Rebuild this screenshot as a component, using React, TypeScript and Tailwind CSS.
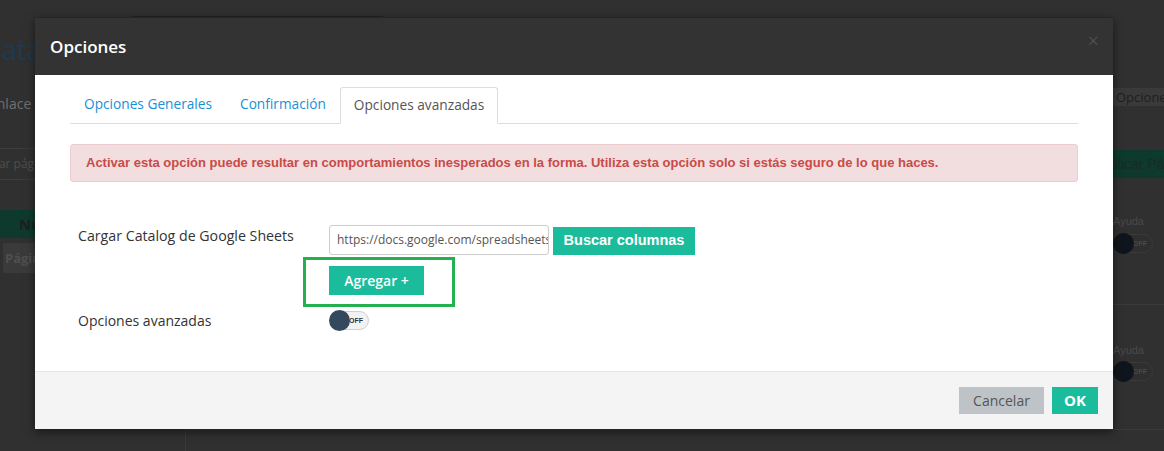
import React from "react";

function Toggle({ dark = false }: { dark?: boolean }) {
  return (
    <div className="relative h-[19px] w-[40px]">
      <div
        className={`absolute inset-y-0 left-[6px] right-0 rounded-full border ${
          dark ? "border-[#3a3a3a] bg-[#2f2f2f]" : "border-[#cfcfcf] bg-[#f2f2f2]"
        } flex items-center justify-end pr-[5px]`}
      >
        <span
          className={`text-[7px] font-bold leading-none ${dark ? "text-[#4a4a4a]" : "text-[#333]"}`}
          style={{ fontFamily: "'Liberation Sans', Arial, sans-serif" }}
        >
          OFF
        </span>
      </div>
      <div
        className={`absolute left-0 top-[-1px] h-[21px] w-[21px] rounded-full ${
          dark ? "bg-[#0f151c]" : "bg-[#34495e]"
        }`}
      />
    </div>
  );
}

export default function App() {
  const sans = { fontFamily: "'Open Sans', 'Noto Sans', sans-serif" };
  const arial = { fontFamily: "'Liberation Sans', Arial, sans-serif" };
  return (
    <div className="relative h-[451px] w-[1164px] overflow-hidden bg-[#303030]" style={sans}>
      {/* dimmed background page, left strip */}
      <div className="absolute left-0 top-0 h-[451px] w-[35px] overflow-hidden">
        <div className="absolute left-[-15px] top-[36px] whitespace-nowrap text-[27px] leading-none text-[#1d3a50]">Catal</div>
        <div className="absolute left-[-11px] top-[93px] whitespace-nowrap text-[14px] text-[#6f6f6f]">Enlace</div>
        <div className="absolute left-0 top-[148px] h-[32px] w-[40px] whitespace-nowrap border-y border-[#3c3c3c] pt-[6px] text-[12px] text-[#4e4e4e]">
          <span className="ml-[-6px]">rar pág</span>
        </div>
        <div className="absolute left-0 top-[210px] h-[28px] w-[40px] bg-[#0d3a2c] pl-[19px] pt-[3px] text-[15px] font-bold text-[#1f1f1f]">
          Nu
        </div>
        <div className="absolute left-[3px] top-[243px] h-[30px] w-[40px] whitespace-nowrap bg-[#3a3a3a] pl-[2px] pt-[6px] text-[13px] font-bold text-[#4f4f4f]">
          Págin
        </div>
      </div>
      <div className="absolute left-[185px] top-[429px] h-[30px] w-[1000px] border-l border-t border-[#3a3a3a]" />
      <div className="absolute left-[131px] top-[16px] h-[1px] w-[252px] bg-[#242424]" />

      {/* dimmed background page, right strip */}
      <div className="absolute left-[1113px] top-0 h-[451px] w-[51px] overflow-hidden" style={arial}>
        <div className="absolute left-0 top-[88px] h-[18px] w-[60px] whitespace-nowrap bg-[#3a3a3a] pl-[3px] text-[13px] leading-[18px] text-[#1e1e1e]" style={sans}>
          Opciones
        </div>
        <div className="absolute left-0 top-[150px] h-[28px] w-[60px] whitespace-nowrap bg-[#0d3a2c] text-[14px] leading-[28px] text-[#1a2a24]">
          <span className="ml-[-3px]">plicar Pá</span>
        </div>
        <div className="absolute left-0 top-[213px] text-[11px] text-[#4a4a4a]">Ayuda</div>
        <div className="absolute left-0 top-[234px]"><Toggle dark /></div>
        <div className="absolute left-0 top-[304px] h-[1px] w-[60px] bg-[#3b3b3b]" />
        <div className="absolute left-0 top-[342px] text-[11px] text-[#4a4a4a]">Ayuda</div>
        <div className="absolute left-0 top-[362px]"><Toggle dark /></div>
      </div>

      {/* modal */}
      <div className="absolute left-[35px] top-[17px] flex h-[412px] w-[1078px] flex-col shadow-[0_3px_9px_rgba(0,0,0,0.5)]">
        <div className="flex h-[58px] items-center justify-between border-t border-[#262626] bg-[#333333] pl-[15px] pr-[14px]">
          <span className="text-[17px] font-semibold text-white">Opciones</span>
          <span className="mt-[-12px] text-[20px] font-light leading-none text-[#5a5a5a]">×</span>
        </div>

        <div className="flex-1 bg-white px-[35px] pt-[12px]">
          {/* tabs */}
          <div className="flex h-[37px] items-end border-b border-[#dddddd] pl-0">
            <div className="flex h-[37px] items-center px-[14px] text-[13.7px] text-[#1a8fd6]">Opciones Generales</div>
            <div className="flex h-[37px] items-center px-[14px] text-[13.7px] text-[#1a8fd6]">Confirmación</div>
            <div className="mb-[-1px] flex h-[37px] items-center rounded-t-[3px] border border-b-white border-[#dddddd] bg-white px-[13px] text-[13.7px] text-[#555555]">
              Opciones avanzadas
            </div>
          </div>

          {/* alert */}
          <div
            className="mt-[20px] flex h-[38px] items-center rounded-[3px] border border-[#ebccd1] bg-[#f2dede] pl-[15px] text-[13px] font-bold text-[#c94a48]"
            style={arial}
          >
            Activar esta opción puede resultar en comportamientos inesperados en la forma. Utiliza esta opción solo si estás seguro de lo que haces.
          </div>

          {/* google sheets row */}
          <div className="mt-[43px] flex items-start">
            <div className="w-[259px] pl-[8px] text-[14.2px] text-[#333333]">Cargar Catalog de Google Sheets</div>
            <div className="flex flex-col">
              <div className="flex items-start gap-[4px]">
                <div className="h-[30px] w-[220px] overflow-hidden whitespace-nowrap rounded-[3px] border border-[#cccccc] pl-[7px] pt-[6px] text-[12px] leading-[16px] text-[#555555]">
                  https://docs.google.com/spreadsheets/d/
                </div>
                <div
                  className="mt-[2px] flex h-[28px] w-[142px] items-center justify-center bg-[#1abc9c] text-[14.5px] font-bold text-white"
                  style={arial}
                >
                  Buscar columnas
                </div>
              </div>
              <div className="ml-[-26px] mt-[2px] h-[50px] w-[152px] border-[3px] border-[#22b14c] pl-[23px] pt-[6px]">
                <div className="flex h-[29px] w-[95px] items-center justify-center bg-[#1abc9c] text-[14px] font-semibold text-white">
                  Agregar +
                </div>
              </div>
            </div>
          </div>

          {/* advanced toggle row */}
          <div className="mt-[3px] flex items-center">
            <div className="w-[259px] pl-[8px] text-[14px] text-[#333333]">Opciones avanzadas</div>
            <Toggle />
          </div>
        </div>

        <div className="flex h-[58px] items-center justify-end gap-[8px] border-t border-[#e5e5e5] bg-[#f4f4f4] pr-[15px]">
          <div className="flex h-[27px] w-[85px] items-center justify-center bg-[#bdc3c7] text-[14px] text-[#555555]">Cancelar</div>
          <div className="flex h-[27px] w-[46px] items-center justify-center bg-[#1abc9c] text-[15px] font-bold text-white">OK</div>
        </div>
      </div>
    </div>
  );
}
